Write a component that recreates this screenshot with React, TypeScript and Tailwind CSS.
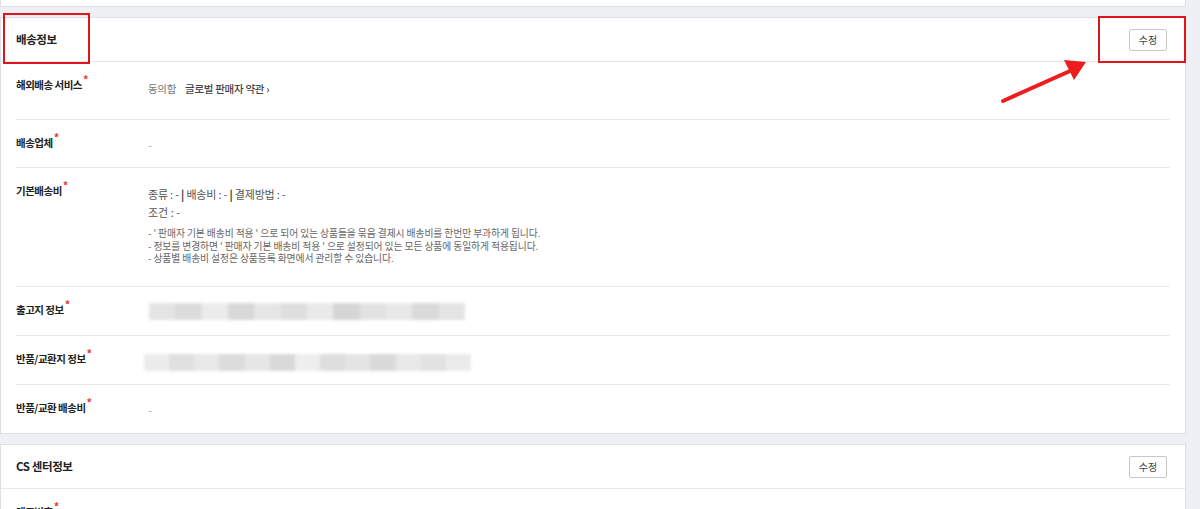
const notes = [
  "- ' 판매자 기본 배송비 적용 ' 으로 되어 있는 상품들을 묶음 결제시 배송비를 한번만 부과하게 됩니다.",
  "- 정보를 변경하면 ' 판매자 기본 배송비 적용 ' 으로 설정되어 있는 모든 상품에 동일하게 적용됩니다.",
  "- 상품별 배송비 설정은 상품등록 화면에서 관리할 수 있습니다.",
];

// blurred (masked) address blocks
const blur1 = ["#e4e4e4", "#dcdcdc", "#ececec", "#d8d8d8", "#e6e6e6", "#dedede", "#eaeaea", "#d6d6d6", "#e2e2e2", "#e8e8e8", "#dadada", "#e4e4e4"];
const blur2 = ["#ececec", "#e0e0e0", "#e8e8e8", "#dcdcdc", "#e6e6e6", "#d9d9d9", "#eeeeee", "#dedede", "#e4e4e4", "#dadada", "#e8e8e8", "#e2e2e2", "#ebebeb"];

function Label({ children }: { children: React.ReactNode }) {
  return (
    <div className="w-[132px] shrink-0 text-[10.5px] tracking-[-0.5px] font-bold text-[#222] leading-[18px]">
      {children}
      <span className="relative -top-[5px] ml-[1px] text-[11px] text-[#e53935]">*</span>
    </div>
  );
}

function Row({ label, children, h, last }: { label: string; children: React.ReactNode; h: string; last?: boolean }) {
  return (
    <div className={`flex pt-[13px] ${h} ${last ? "" : "border-b border-[#e8e8e8]"}`}>
      <Label>{label}</Label>
      <div className="flex-1 pt-[3px]">{children}</div>
    </div>
  );
}

function Blur({ colors, w }: { colors: string[]; w: number }) {
  return (
    <div className="flex h-[17px] blur-[1.5px]" style={{ width: w }}>
      {colors.map((c, i) => (
        <div key={i} className="flex-1 h-full" style={{ background: c }} />
      ))}
    </div>
  );
}

function Header({ title }: { title: string }) {
  return (
    <div className="flex items-center justify-between h-[44px] px-[15px] border-b border-[#e8e8e8]">
      <h2 className="text-[11.5px] tracking-[-0.4px] font-bold text-[#222]">{title}</h2>
      <button className="w-[38px] h-[22px] mr-[3px] border border-[#c8c8c8] rounded-[2px] bg-white text-[10px] text-[#444]">
        수정
      </button>
    </div>
  );
}

export default function App() {
  return (
    <div className="relative w-[1200px] h-[509px] overflow-hidden bg-[#eef0f5] font-['Noto_Sans_CJK_KR','Noto_Sans',sans-serif]">
      <div className="w-[1186px] flex flex-col gap-[10px]">
        <div className="h-[7px] bg-white border border-t-0 border-[#dcdfe6]" />

        <section className="bg-white border border-[#dcdfe6]">
          <Header title="배송정보" />
          <div className="px-[15px]">
            <Row label="해외배송 서비스" h="h-[58px]">
              <div className="flex items-center gap-[9px] text-[10.5px] tracking-[-0.3px] leading-[18px] pt-[2px]">
                <span className="text-[#777]">동의함</span>
                <span className="text-[#444] font-medium">글로벌 판매자 약관 ›</span>
              </div>
            </Row>
            <Row label="배송업체" h="h-[48px]">
              <div className="text-[11px] leading-[18px] text-[#aaa]">-</div>
            </Row>
            <Row label="기본배송비" h="h-[119px]">
              <div className="text-[11px] tracking-[-0.2px] leading-[18px] text-[#555] pt-[1px]">
                종류 : - <b className="font-bold text-[#333]">|</b> 배송비 : - <b className="font-bold text-[#333]">|</b> 결제방법 : -
              </div>
              <div className="text-[11px] leading-[18px] text-[#555]">조건 : -</div>
              <div className="mt-[6px] text-[9.8px] tracking-[-0.1px] leading-[12.5px] text-[#666]">
                {notes.map((n) => (
                  <div key={n}>{n}</div>
                ))}
              </div>
            </Row>
            <Row label="출고지 정보" h="h-[49px]">
              <div className="pl-[1px]">
                <Blur colors={blur1} w={316} />
              </div>
            </Row>
            <Row label="반품/교환지 정보" h="h-[49px]">
              <div className="pt-[2px] -ml-[4px]">
                <Blur colors={blur2} w={327} />
              </div>
            </Row>
            <Row label="반품/교환 배송비" h="h-[48px]" last>
              <div className="text-[11px] leading-[18px] text-[#aaa]">-</div>
            </Row>
          </div>
        </section>

        <section className="bg-white border border-[#dcdfe6] h-[80px]">
          <Header title="CS 센터정보" />
          <div className="px-[15px]">
            <Row label="대표번호" h="h-[48px]" last>
              <div />
            </Row>
          </div>
        </section>
      </div>

      {/* annotations */}
      <div className="absolute left-[3px] top-[13px] w-[87px] h-[51px] border-[2px] border-[#e0141b]" />
      <div className="absolute left-[1098px] top-[16px] w-[88px] h-[47px] border-[2px] border-[#e0141b]" />
      <svg className="absolute left-0 top-0" width="1200" height="509">
        <line x1="1003" y1="101" x2="1070" y2="71" stroke="#ee1c1c" strokeWidth="4" strokeLinecap="round" />
        <polygon points="1086,62 1064,60 1074,80" fill="#ee1c1c" />
      </svg>
    </div>
  );
}
